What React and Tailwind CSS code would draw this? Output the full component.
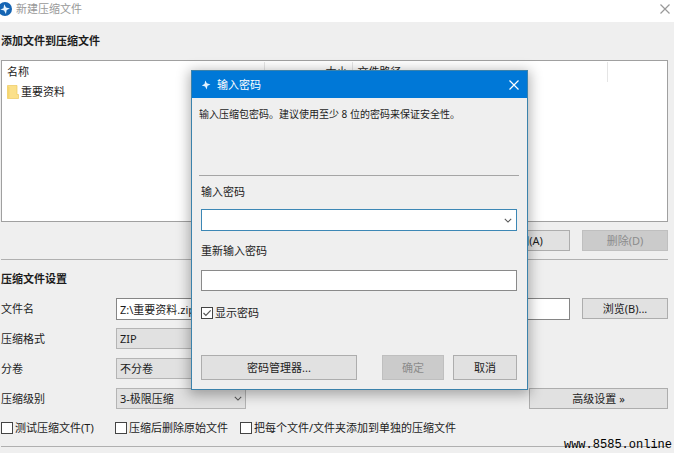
import { useState } from 'react';

function Chevron({ className }) {
  return (
    <svg viewBox="0 0 10 6" className={className} fill="none" stroke="#555" strokeWidth="1.3" aria-hidden="true">
      <path d="M1 1l4 4 4-4" />
    </svg>
  );
}

function Cross({ className }) {
  return (
    <svg viewBox="0 0 10 10" className={className} fill="none" stroke="currentColor" strokeWidth="1.2" aria-hidden="true">
      <path d="M.5.5l9 9M9.5.5l-9 9" />
    </svg>
  );
}

function Logo({ className }) {
  return (
    <svg viewBox="0 0 14 14" className={className} aria-hidden="true">
      <circle cx="7" cy="7" r="7" fill="#1565b4" />
      <path d="M6.2 2.2l1.8 3.200 3.900 1.200-3.200 1.300-.8 4.100-1.800-3.400-3.800-1 3.200-1.400z" fill="#eaf6ff" />
    </svg>
  );
}

function Button({ className = '', ...props }) {
  return (
    <button
      type="button"
      className={`flex items-center justify-center border border-[#adadad] bg-[#e1e1e1] whitespace-nowrap disabled:border-[#bfbfbf] disabled:bg-[#cbcbcb] disabled:text-[#8c8c8c] ${className}`}
      {...props}
    />
  );
}

function Check({ label, ...props }) {
  return (
    <label className="flex items-center gap-0.5 whitespace-nowrap">
      <span className="grid size-3 place-items-center">
        <input
          type="checkbox"
          className="peer col-start-1 row-start-1 size-3 appearance-none border border-[#444] bg-white"
          {...props}
        />
        <svg
          viewBox="0 0 10 10"
          className="pointer-events-none invisible col-start-1 row-start-1 size-[10px] peer-checked:visible"
          fill="none"
          stroke="#555"
          strokeWidth="1.2"
          aria-hidden="true"
        >
          <path d="M1.5 5l2.4 2.4L8.7 2.4" />
        </svg>
      </span>
      {label}
    </label>
  );
}

function SelectRow({ id, label, options, children }) {
  return (
    <div className="flex h-[21px] items-center">
      <label htmlFor={id} className="w-[115px] shrink-0">{label}</label>
      <div className="grid h-[21px] w-[130px] items-center">
        <select
          id={id}
          className="col-start-1 row-start-1 h-[21px] w-full appearance-none border border-[#b4b4b4] bg-[#e1e1e1] pl-[3px]"
        >
          {options.map((option) => (
            <option key={option}>{option}</option>
          ))}
        </select>
        <Chevron className="pointer-events-none col-start-1 row-start-1 mr-1 h-[5px] w-2 justify-self-end" />
      </div>
      {children}
    </div>
  );
}

function FileList() {
  return (
    <div className="h-[162px] border border-[#a0a0a0] bg-white pt-px">
      <table className="w-full table-fixed border-collapse text-left">
        <thead>
          <tr className="h-5">
            <th className="w-[262px] border-r border-[#e5e5e5] pl-[5px] font-normal">名称</th>
            <th className="w-[88px] border-r border-[#e5e5e5] pr-1 text-right font-normal">大小</th>
            <th className="w-[255px] border-r border-[#e5e5e5] pl-[5px] font-normal">文件路径</th>
            <th aria-label="其他" />
          </tr>
        </thead>
        <tbody>
          <tr className="h-5">
            <td className="pl-[5px]">
              <span className="flex items-center gap-0.5">
                <svg viewBox="0 0 12 14" className="h-[14px] w-3" aria-hidden="true">
                  <path d="M.5.5H10v9h1.500v4H.5z" fill="#fbe08a" stroke="#ecc95f" strokeWidth=".7" />
                  <path d="M.5 1l2 1v11.500h-2z" fill="#f5d66f" />
                </svg>
                重要资料
              </span>
            </td>
            <td />
            <td />
            <td />
          </tr>
        </tbody>
      </table>
    </div>
  );
}

function PasswordDialog() {
  const [shown, setShown] = useState(true);
  const type = shown ? 'text' : 'password';
  return (
    <section
      role="dialog"
      aria-labelledby="dialog-title"
      className="absolute top-[70px] left-[191px] w-[337px] border border-[#3b82ab] bg-[#efefef] shadow-[0_3px_12px_2px_rgba(0,0,0,0.3)]"
    >
      <header className="flex h-[27px] items-center bg-[#0078d7] pr-2 pl-[9px] text-white">
        <svg viewBox="0 0 10 10" className="size-[10px]" aria-hidden="true">
          <path d="M4.300.5l1.500 2.700 3.700 1.300-3 1.200-.8 3.800-1.600-2.900L.8 5.400l2.700-1.300z" fill="#e4f4ff" />
        </svg>
        <h2 id="dialog-title" className="ml-1.5 flex-1">输入密码</h2>
        <button type="button" aria-label="关闭"><Cross className="size-[10px]" /></button>
      </header>
      <div className="pr-[10px] pb-[9px] pl-[9px]">
        <p className="-mx-0.5 h-[78px] border-b border-[#a5a5a5] pt-2 text-[10px] leading-4 whitespace-nowrap">
          输入压缩包密码。建议使用至少 8 位的密码来保证安全性。
        </p>
        <label htmlFor="password" className="mt-2 block">输入密码</label>
        <div className="mt-[9px] flex h-[22px] border border-[#3c87b5] bg-white">
          <input id="password" type={type} className="min-w-0 flex-1 px-1 outline-none" />
          <button type="button" aria-label="历史密码" className="flex w-4 items-center justify-center">
            <Chevron className="h-[5px] w-2" />
          </button>
        </div>
        <label htmlFor="password-again" className="mt-3 block">重新输入密码</label>
        <input id="password-again" type={type} className="mt-[11px] block h-[21px] w-full border border-[#8a8a8a] bg-white px-1 outline-none" />
        <div className="mt-3.5 flex h-4 items-center">
          <Check label="显示密码" checked={shown} onChange={(e) => setShown(e.target.checked)} />
        </div>
        <div className="mt-[34px] flex h-[25px] justify-between">
          <Button className="w-[156px]">密码管理器...</Button>
          <div className="flex gap-[9px]">
            <Button className="w-[62px]" disabled>确定</Button>
            <Button className="w-16">取消</Button>
          </div>
        </div>
      </div>
    </section>
  );
}

export default function App() {
  return (
    <div className="relative min-h-screen bg-[#efefef] font-['Noto_Sans','Noto_Sans_CJK_SC',sans-serif] text-[11px] leading-4 text-[#1c1c1c]">
      <header className="flex h-[22px] items-center bg-white pr-1 pb-[5px] text-[#999]">
        <Logo className="-ml-0.5 size-[14px]" />
        <h1 className="ml-1 flex-1">新建压缩文件</h1>
        <button type="button" aria-label="关闭"><Cross className="size-[10px]" /></button>
      </header>

      <main className="pr-[6px] pl-px">
        <h2 className="pt-[11px] pb-[11px] font-bold">添加文件到压缩文件</h2>
        <FileList />
        <div className="mt-2 flex justify-end gap-3 border-b border-[#b0b0b0] pb-2">
          <Button className="h-[21px] w-[86px] pr-1">添加(A)</Button>
          <Button className="h-[21px] w-[86px]" disabled>删除(D)</Button>
        </div>

        <h2 className="pt-[11px] pb-[11px] font-bold">压缩文件设置</h2>
        <div className="flex flex-col gap-[9px]">
          <div className="flex h-[21px] items-center">
            <label htmlFor="file-name" className="w-[115px] shrink-0">文件名</label>
            <input
              id="file-name"
              type="text"
              defaultValue="Z:\重要资料.zip"
              className="h-[22px] min-w-0 flex-1 border border-[#858585] bg-white px-[3px] outline-none"
            />
            <Button className="ml-3 h-[21px] w-[86px]">浏览(B)...</Button>
          </div>
          <SelectRow id="format" label="压缩格式" options={['ZIP', '7Z']} />
          <SelectRow id="volume" label="分卷" options={['不分卷']} />
          <SelectRow id="level" label="压缩级别" options={['3-极限压缩']}>
            <Button className="ml-auto h-[21px] w-[139px]">高级设置 »</Button>
          </SelectRow>
        </div>
        <div className="mt-[11px] flex h-4 items-center">
          <div className="w-[114px]"><Check label="测试压缩文件(T)" /></div>
          <div className="w-[125px]"><Check label="压缩后删除原始文件" /></div>
          <Check label="把每个文件/文件夹添加到单独的压缩文件" />
        </div>
        <hr className="mt-2.5 border-[#b0b0b0]" />
      </main>

      <PasswordDialog />
      <div className="absolute right-0.5 bottom-0 font-['Liberation_Mono',monospace] text-[12px] leading-4 text-black">
        www.8585.online
      </div>
    </div>
  );
}
